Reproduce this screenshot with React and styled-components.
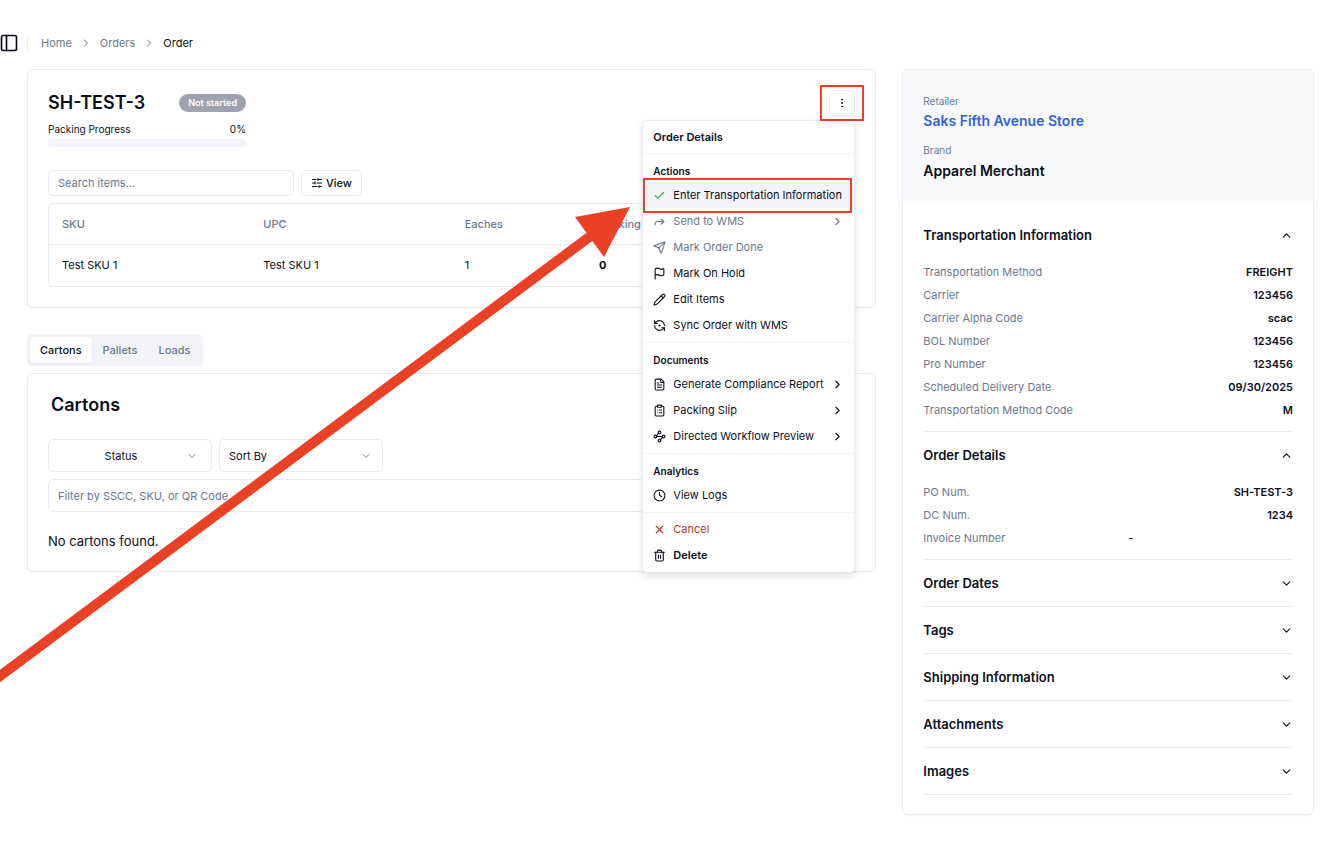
import React from "react";
import styled, { createGlobalStyle } from "styled-components";
import {
  Check,
  ChevronDown,
  ChevronRight,
  ChevronUp,
  ClipboardList,
  Clock,
  EllipsisVertical,
  FileText,
  Flag,
  Forward,
  PanelLeft,
  Pencil,
  RefreshCcwDot,
  Send,
  SlidersHorizontal,
  Trash2,
  Waypoints,
  X,
} from "lucide-react";

const menuGroups = [
  {
    label: "Actions",
    items: [
      { icon: Check, text: "Enter Transportation Information", active: true },
      { icon: Forward, text: "Send to WMS", muted: true, sub: true },
      { icon: Send, text: "Mark Order Done", muted: true },
      { icon: Flag, text: "Mark On Hold" },
      { icon: Pencil, text: "Edit Items" },
      { icon: RefreshCcwDot, text: "Sync Order with WMS" },
    ],
  },
  {
    label: "Documents",
    items: [
      { icon: FileText, text: "Generate Compliance Report", sub: true },
      { icon: ClipboardList, text: "Packing Slip", sub: true },
      { icon: Waypoints, text: "Directed Workflow Preview", sub: true },
    ],
  },
  {
    label: "Analytics",
    items: [{ icon: Clock, text: "View Logs" }],
  },
  {
    items: [
      { icon: X, text: "Cancel", danger: true },
      { icon: Trash2, text: "Delete", bold: true },
    ],
  },
];

const sections = [
  {
    title: "Transportation Information",
    rows: [
      ["Transportation Method", "FREIGHT"],
      ["Carrier", "123456"],
      ["Carrier Alpha Code", "scac"],
      ["BOL Number", "123456"],
      ["Pro Number", "123456"],
      ["Scheduled Delivery Date", "09/30/2025"],
      ["Transportation Method Code", "M"],
    ],
  },
  {
    title: "Order Details",
    rows: [
      ["PO Num.", "SH-TEST-3"],
      ["DC Num.", "1234"],
      ["Invoice Number", null],
    ],
  },
  { title: "Order Dates" },
  { title: "Tags" },
  { title: "Shipping Information" },
  { title: "Attachments" },
  { title: "Images" },
];

const ActionsMenu = () => (
  <Menu role="menu">
    <MenuTitle>Order Details</MenuTitle>
    {menuGroups.map((group, i) => (
      <MenuGroup key={i}>
        {group.label && <MenuLabel>{group.label}</MenuLabel>}
        {group.items.map(({ icon: Icon, text, sub, ...state }) => (
          <MenuItem
            key={text}
            role="menuitem"
            $active={state.active}
            $muted={state.muted}
            $danger={state.danger}
            $bold={state.bold}
          >
            <Icon size={13} />
            <span>{text}</span>
            {sub && <ChevronRight size={13} />}
          </MenuItem>
        ))}
      </MenuGroup>
    ))}
  </Menu>
);

const OrderCard = () => (
  <Card>
    <OrderHeader>
      <Summary>
        <TitleRow>
          <OrderTitle>SH-TEST-3</OrderTitle>
          <Badge>Not started</Badge>
        </TitleRow>
        <ProgressText>
          <span>Packing Progress</span>
          <span>0%</span>
        </ProgressText>
        <ProgressBar />
      </Summary>
      <MenuAnchor>
        <MoreButton aria-label="Order actions">
          <EllipsisVertical size={12} />
        </MoreButton>
        <ButtonHighlight />
        <ActionsMenu />
      </MenuAnchor>
    </OrderHeader>

    <Toolbar>
      <SearchInput
        type="text"
        aria-label="Search items"
        placeholder="Search items..."
      />
      <ViewButton>
        <SlidersHorizontal size={12} />
        View
      </ViewButton>
    </Toolbar>

    <TableFrame>
      <Table>
        <thead>
          <tr>
            <th>SKU</th>
            <th>UPC</th>
            <th>Eaches</th>
            <th>Packing</th>
            <th aria-label="Actions" />
          </tr>
        </thead>
        <tbody>
          <tr>
            <td>Test SKU 1</td>
            <td>Test SKU 1</td>
            <td>1</td>
            <td>
              <strong>0</strong>
            </td>
            <td />
          </tr>
        </tbody>
      </Table>
    </TableFrame>
  </Card>
);

const CartonsCard = () => (
  <Card>
    <CartonsTitle>Cartons</CartonsTitle>
    <Filters>
      <FilterButton $center>
        <span>Status</span>
        <ChevronDown size={12} />
      </FilterButton>
      <FilterButton>
        <span>Sort By</span>
        <ChevronDown size={12} />
      </FilterButton>
    </Filters>
    <FilterInput
      type="text"
      aria-label="Filter cartons"
      placeholder="Filter by SSCC, SKU, or QR Code"
    />
    <Empty>No cartons found.</Empty>
  </Card>
);

const DetailsPanel = () => (
  <Panel>
    <PanelHeader>
      <Caption>Retailer</Caption>
      <RetailerLink href="#retailer">Saks Fifth Avenue Store</RetailerLink>
      <Caption>Brand</Caption>
      <BrandName>Apparel Merchant</BrandName>
    </PanelHeader>
    <PanelBody>
      {sections.map(({ title, rows }) => (
        <Section key={title}>
          <SectionButton aria-expanded={Boolean(rows)}>
            {title}
            {rows ? <ChevronUp size={13} /> : <ChevronDown size={13} />}
          </SectionButton>
          {rows && (
            <Details>
              {rows.map(([label, value]) => (
                <DetailRow key={label} $empty={!value}>
                  <dt>{label}</dt>
                  <dd>{value || "-"}</dd>
                </DetailRow>
              ))}
            </Details>
          )}
        </Section>
      ))}
    </PanelBody>
  </Panel>
);

const App = () => (
  <>
    <GlobalStyle />
    <Page>
      <TopBar>
        <IconButton aria-label="Toggle sidebar">
          <PanelLeft size={20} strokeWidth={2} />
        </IconButton>
        <Divider />
        <Breadcrumb aria-label="Breadcrumb">
          <a href="#home">Home</a>
          <ChevronRight size={12} />
          <a href="#orders">Orders</a>
          <ChevronRight size={12} />
          <span>Order</span>
        </Breadcrumb>
      </TopBar>

      <Columns>
        <Main>
          <OrderCard />
          <Tabs role="tablist">
            <Tab role="tab" aria-selected="true" $selected>
              Cartons
            </Tab>
            <Tab role="tab" aria-selected="false">
              Pallets
            </Tab>
            <Tab role="tab" aria-selected="false">
              Loads
            </Tab>
          </Tabs>
          <CartonsCard />
        </Main>
        <DetailsPanel />
      </Columns>

      <Arrow viewBox="0 0 640 690" aria-hidden="true">
        <path d="M-8 682 L596 232" stroke="#ea4025" strokeWidth="10" />
        <path d="M630 207 L575 217 L604 257 Z" fill="#ea4025" />
      </Arrow>
    </Page>
  </>
);

const GlobalStyle = createGlobalStyle`
  * {
    box-sizing: border-box;
  }

  body {
    margin: 0;
    background: #fff;
    color: #0b0f1c;
    font-family: Inter, "Liberation Sans", sans-serif;
    font-size: 11px;
    line-height: 16px;
  }

  button,
  input {
    color: inherit;
    font: inherit;
  }

  button {
    padding: 0;
    border: 0;
    background: none;
    cursor: pointer;
  }

  a {
    color: inherit;
    text-decoration: none;
  }
`;

const Page = styled.div`
  position: relative;
  min-height: 100vh;
  padding: 30px 26px 33px 0;
  overflow: hidden;
`;

const TopBar = styled.header`
  display: flex;
  align-items: center;
  height: 26px;
`;

const IconButton = styled.button`
  display: flex;
  margin-left: -1px;
`;

const Divider = styled.span`
  width: 1px;
  height: 13px;
  margin: 0 13px 0 8px;
  background: #e8ebf3;
`;

const Breadcrumb = styled.nav`
  display: flex;
  align-items: center;
  gap: 8px;
  color: #6b7890;

  span {
    color: #0b0f1c;
  }
`;

const Columns = styled.div`
  display: flex;
  align-items: flex-start;
  gap: 26px;
  margin: 13px 0 0 27px;
`;

const Main = styled.main`
  flex: 850;
  min-width: 0;
`;

const Card = styled.section`
  padding: 20px;
  border: 1px solid #e8ebf3;
  border-radius: 6px;
  background: #fff;
  box-shadow: 0 1px 2px rgba(15, 23, 42, 0.04);
`;

const OrderHeader = styled.div`
  display: flex;
  justify-content: space-between;
  align-items: flex-start;
`;

const Summary = styled.div`
  width: 198px;
`;

const TitleRow = styled.div`
  display: flex;
  justify-content: space-between;
  align-items: center;
  height: 26px;
`;

const OrderTitle = styled.h1`
  margin: 0;
  font-size: 18px;
  font-weight: 600;
  line-height: 26px;
`;

const Badge = styled.span`
  padding: 1px 9px;
  border-radius: 9px;
  background: #9ea3af;
  color: #fff;
  font-size: 9px;
  font-weight: 600;
`;

const ProgressText = styled.div`
  display: flex;
  justify-content: space-between;
  margin-top: 5px;
  font-size: 10px;
`;

const ProgressBar = styled.div`
  height: 8px;
  margin-top: 2px;
  border-radius: 4px;
  background: #f2f4f9;
`;

const MenuAnchor = styled.div`
  position: relative;
`;

const MoreButton = styled.button`
  display: flex;
  justify-content: center;
  align-items: center;
  width: 26px;
  height: 26px;
  border: 1px solid #e8ebf3;
  border-radius: 5px;
`;

const ButtonHighlight = styled.span`
  position: absolute;
  z-index: 3;
  inset: -5px -9px;
  border: 2px solid #ea4025;
  pointer-events: none;
`;

const Menu = styled.div`
  position: absolute;
  z-index: 2;
  top: 30px;
  right: 0;
  width: 213px;
  border: 1px solid #e8ebf3;
  border-radius: 5px;
  background: #fff;
  box-shadow: 0 3px 6px rgba(15, 23, 42, 0.12);
`;

const MenuTitle = styled.div`
  padding: 8px 10px;
  font-weight: 600;
`;

const MenuGroup = styled.div`
  padding: 4px 3px;
  border-top: 1px solid #f2f4f9;

  &:last-child {
    padding-top: 3px;
  }
`;

const MenuLabel = styled.div`
  padding: 5px 7px 3px;
  font-size: 10px;
  font-weight: 600;
`;

const itemColor = ({ $muted, $danger }) => {
  if ($muted) return "#6b7890";
  return $danger ? "#b9382c" : "#0b0f1c";
};

const MenuItem = styled.button`
  position: relative;
  display: flex;
  align-items: center;
  gap: 7px;
  width: 100%;
  height: 26px;
  padding: 0 7px;
  border-radius: 3px;
  background: ${({ $active }) => ($active ? "#f2f4f9" : "none")};
  color: ${itemColor};
  font-weight: ${({ $bold }) => ($bold ? 600 : 400)};
  white-space: nowrap;

  > svg:first-child {
    flex: none;
    color: ${({ $active }) => ($active ? "#43a653" : "inherit")};
  }

  > svg:last-child {
    margin-left: auto;
  }

  &::after {
    content: "";
    display: ${({ $active }) => ($active ? "block" : "none")};
    position: absolute;
    z-index: 1;
    inset: -4px -1px -5px -3px;
    border: 2px solid #ea4025;
  }
`;

const Toolbar = styled.div`
  display: flex;
  gap: 7px;
  margin-top: 23px;
`;

const Input = styled.input`
  padding: 0 9px;
  border: 1px solid #e8ebf3;
  border-radius: 5px;
  background: #fff;
  outline: none;

  &::placeholder {
    color: #6b7890;
    opacity: 1;
  }
`;

const SearchInput = styled(Input)`
  width: 246px;
  height: 26px;
`;

const ViewButton = styled.button`
  display: flex;
  align-items: center;
  gap: 3px;
  height: 26px;
  padding: 0 9px;
  border: 1px solid #e8ebf3;
  border-radius: 5px;
  font-weight: 500;
`;

const TableFrame = styled.div`
  margin-top: 7px;
  border: 1px solid #e8ebf3;
  border-radius: 5px;
`;

const Table = styled.table`
  width: 100%;
  border-collapse: collapse;
  table-layout: fixed;

  th,
  td {
    height: 40px;
    padding: 0 13px;
    text-align: left;
  }

  th:first-child,
  th:nth-child(2) {
    width: 25%;
  }

  th {
    border-bottom: 1px solid #e2e6ef;
    color: #6b7890;
    font-weight: 500;
  }

  td {
    height: 42px;
  }

  strong {
    font-weight: 700;
  }
`;

const Tabs = styled.div`
  display: inline-flex;
  gap: 1px;
  margin: 26px 0 7px;
  padding: 3px;
  border-radius: 5px;
  background: #f2f4f9;
  vertical-align: top;
`;

const Tab = styled.button`
  height: 26px;
  padding: 0 10px;
  border-radius: 3px;
  background: ${({ $selected }) => ($selected ? "#fff" : "none")};
  box-shadow: ${({ $selected }) =>
    $selected ? "0 1px 2px rgba(15, 23, 42, 0.08)" : "none"};
  color: ${({ $selected }) => ($selected ? "#0b0f1c" : "#6b7890")};
  font-weight: 500;
`;

const CartonsTitle = styled.h2`
  margin: 0 3px;
  font-size: 18px;
  font-weight: 600;
  line-height: 22px;
`;

const Filters = styled.div`
  display: flex;
  gap: 7px;
  margin: 23px 0 7px;
`;

const FilterButton = styled.button`
  display: flex;
  align-items: center;
  width: 164px;
  height: 33px;
  padding: 0 ${({ $center }) => ($center ? "13px 0 7px" : "10px 0 9px")};
  border: 1px solid #e8ebf3;
  border-radius: 5px;

  span {
    flex: 1;
    text-align: ${({ $center }) => ($center ? "center" : "left")};
  }

  svg {
    opacity: 0.5;
  }
`;

const FilterInput = styled(Input)`
  display: block;
  width: 100%;
  height: 33px;
`;

const Empty = styled.p`
  margin: 20px 0 0;
  font-size: 13px;
  line-height: 19px;
`;

const Panel = styled.aside`
  flex: 410;
  min-width: 0;
  overflow: hidden;
  border: 1px solid #e8ebf3;
  border-radius: 6px;
  box-shadow: 0 1px 2px rgba(15, 23, 42, 0.04);
`;

const PanelHeader = styled.div`
  display: flex;
  flex-direction: column;
  align-items: flex-start;
  padding: 23px 20px 20px;
  background: #f8fafc;
`;

const Caption = styled.span`
  color: #6b7890;
  font-size: 10px;
`;

const RetailerLink = styled.a`
  margin: 2px 0 11px;
  color: #335fe0;
  font-size: 14px;
  font-weight: 600;
  line-height: 20px;
`;

const BrandName = styled.strong`
  margin-top: 3px;
  font-size: 14px;
  font-weight: 600;
  line-height: 20px;
`;

const PanelBody = styled.div`
  padding: 11px 20px 19px;
`;

const Section = styled.section`
  border-bottom: 1px solid #e8ebf3;
`;

const SectionButton = styled.button`
  display: flex;
  justify-content: space-between;
  align-items: center;
  width: 100%;
  height: 46px;
  font-size: 13px;
  font-weight: 600;
`;

const Details = styled.dl`
  margin: 0;
  padding: 2px 0 10px;
`;

const DetailRow = styled.div`
  display: grid;
  grid-template-columns: 1fr 1fr;
  height: 23px;
  align-items: center;

  dt {
    color: #6b7890;
  }

  dd {
    margin: 0 0 0 20px;
    font-weight: 600;
    text-align: ${({ $empty }) => ($empty ? "left" : "right")};
  }
`;

const Arrow = styled.svg`
  position: absolute;
  z-index: 4;
  top: 0;
  left: 0;
  width: 640px;
  height: 690px;
  pointer-events: none;
`;

export default App;
